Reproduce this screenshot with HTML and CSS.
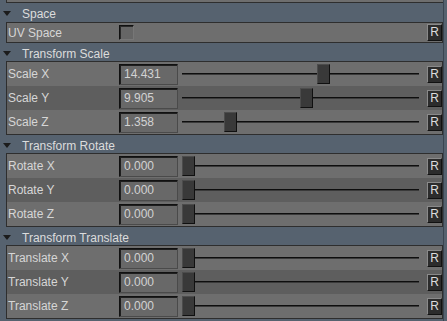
FILE: index.html
```html
<!DOCTYPE html>
<html lang="en">
<head>
  <meta charset="UTF-8">
  <title>Attribute Editor</title>
  <link rel="stylesheet" href="styles.css">
</head>
<body>
  <div class="panel">
    <div class="sliver"></div>

    <!-- Space -->
    <section class="group">
      <div class="group-head"><span class="arrow"></span>Space</div>
      <div class="group-body">
        <div class="row row-short">
          <span class="label">UV Space</span>
          <span class="check"></span>
          <span class="spacer"></span>
          <button class="reset">R</button>
        </div>
      </div>
    </section>

    <!-- Transform Scale -->
    <section class="group">
      <div class="group-head"><span class="arrow"></span>Transform Scale</div>
      <div class="group-body">
        <div class="row">
          <span class="label">Scale X</span>
          <span class="field">14.431</span>
          <div class="slider"><div class="track"></div><div class="handle" style="left:135px"></div></div>
          <button class="reset">R</button>
        </div>
        <div class="row alt">
          <span class="label">Scale Y</span>
          <span class="field">9.905</span>
          <div class="slider"><div class="track"></div><div class="handle" style="left:118px"></div></div>
          <button class="reset">R</button>
        </div>
        <div class="row">
          <span class="label">Scale Z</span>
          <span class="field">1.358</span>
          <div class="slider"><div class="track"></div><div class="handle" style="left:42px"></div></div>
          <button class="reset">R</button>
        </div>
      </div>
    </section>

    <!-- Transform Rotate -->
    <section class="group">
      <div class="group-head"><span class="arrow"></span>Transform Rotate</div>
      <div class="group-body">
        <div class="row">
          <span class="label">Rotate X</span>
          <span class="field">0.000</span>
          <div class="slider"><div class="track"></div><div class="handle" style="left:0px"></div></div>
          <button class="reset">R</button>
        </div>
        <div class="row alt">
          <span class="label">Rotate Y</span>
          <span class="field">0.000</span>
          <div class="slider"><div class="track"></div><div class="handle" style="left:0px"></div></div>
          <button class="reset">R</button>
        </div>
        <div class="row">
          <span class="label">Rotate Z</span>
          <span class="field">0.000</span>
          <div class="slider"><div class="track"></div><div class="handle" style="left:0px"></div></div>
          <button class="reset">R</button>
        </div>
      </div>
    </section>

    <!-- Transform Translate -->
    <section class="group">
      <div class="group-head"><span class="arrow"></span>Transform Translate</div>
      <div class="group-body">
        <div class="row">
          <span class="label">Translate X</span>
          <span class="field">0.000</span>
          <div class="slider"><div class="track"></div><div class="handle" style="left:0px"></div></div>
          <button class="reset">R</button>
        </div>
        <div class="row alt">
          <span class="label">Translate Y</span>
          <span class="field">0.000</span>
          <div class="slider"><div class="track"></div><div class="handle" style="left:0px"></div></div>
          <button class="reset">R</button>
        </div>
        <div class="row">
          <span class="label">Translate Z</span>
          <span class="field">0.000</span>
          <div class="slider"><div class="track"></div><div class="handle" style="left:0px"></div></div>
          <button class="reset">R</button>
        </div>
      </div>
    </section>
  </div>
</body>
</html>
```

FILE: styles.css
```css
:root {
  --bg: #56626f;
  --row: #6e6e6e;
  --row-alt: #5e5e5e;
  --frame: #2e2e2e;
  --text: #d6d6d6;
}
* { box-sizing: border-box; margin: 0; padding: 0; }
body {
  background: var(--bg);
  font-family: 'Liberation Sans', Arial, sans-serif;
  font-size: 12px;
  color: var(--text);
  overflow: hidden;
}
.panel {
  width: 444px;
  height: 321px;
  border-right: 1px solid #3b4551;
}
.sliver {
  height: 3px;
  margin-left: 6px;
  background: var(--row);
  border-left: 1px solid var(--frame);
  border-bottom: 1px solid var(--frame);
}
.group-head {
  height: 18px;
  display: flex;
  align-items: center;
  padding: 3px 0 0 22px;
  position: relative;
  color: #dcdcdc;
}
.group:first-of-type .group-head { height: 19px; }
.arrow {
  position: absolute;
  left: 3px;
  top: 8px;
  width: 0;
  height: 0;
  border-left: 4px solid transparent;
  border-right: 4px solid transparent;
  border-top: 5px solid #1c1c1c;
}
.group-body {
  margin-left: 6px;
  border: 1px solid var(--frame);
}
.row {
  height: 24px;
  display: flex;
  align-items: center;
  background: var(--row);
}
.row.alt { background: var(--row-alt); }
.row-short { height: 19px; }
.label {
  width: 112px;
  padding-left: 1px;
  white-space: nowrap;
}
.field {
  width: 59px;
  height: 21px;
  display: flex;
  align-items: center;
  padding-left: 4px;
  background: #686868;
  border: 1px solid #111;
  border-right-color: #4a4a4a;
  border-bottom-color: #4a4a4a;
  box-shadow: inset 1px 1px 0 #1e1e1e;
  color: #d2d2d2;
}
.check {
  width: 15px;
  height: 15px;
  background: #666;
  border: 1px solid #111;
  border-right-color: #777;
  border-bottom-color: #777;
  box-shadow: inset 1px 1px 0 #2a2a2a;
}
.spacer { flex: 1; }
.slider {
  flex: 1;
  height: 100%;
  margin: 0 8px 0 4px;
  position: relative;
  display: flex;
  align-items: center;
}
.track {
  width: 100%;
  height: 2px;
  background: #0e0e0e;
  border-bottom: 1px solid #3a3a3a;
}
.handle {
  position: absolute;
  top: 2px;
  width: 13px;
  height: 20px;
  background: #393939;
  border: 1px solid #4c4c4c;
  border-right-color: #101010;
  border-bottom-color: #101010;
}
.reset {
  width: 15px;
  height: 17px;
  background: #2c2c2c;
  border: 1px solid #8a8a8a;
  border-right-color: #111;
  border-bottom-color: #111;
  color: #dcdcdc;
  font-family: 'Liberation Sans', Arial, sans-serif;
  font-size: 12px;
  line-height: 15px;
  text-align: center;
  padding: 0;
}
```
